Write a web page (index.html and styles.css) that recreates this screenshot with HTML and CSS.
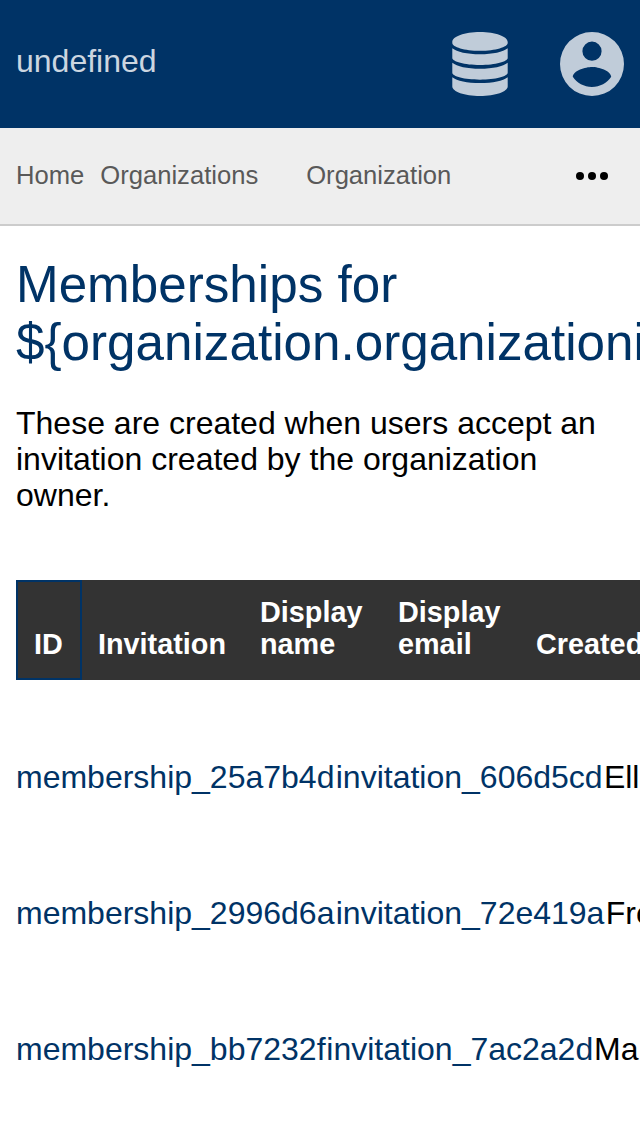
FILE: index.html
```html
<!DOCTYPE html>
<html lang="en">
<head>
<meta charset="utf-8">
<title>Memberships</title>
<link rel="stylesheet" href="styles.css">
</head>
<body>
<header class="topbar">
  <a class="brand">undefined</a>
  <nav class="actions">
    <svg class="database" viewBox="0 0 56 64"><path d="M28 0C43.5 0 55.7 4.5 55.7 10V11C55.7 15 43.5 18.8 28 18.8S.3 15 .3 11V10C.3 4.5 12.5 0 28 0ZM.3 16.2C5 20 15 22.2 28 22.2S51 20 55.7 16.2V26C55.7 29.5 43.5 33 28 33S.3 29.5 .3 26ZM.3 30.8C5 34.6 15 36.8 28 36.8S51 34.6 55.7 30.8V40.8C55.7 44.3 43.5 47.7 28 47.7S.3 44.3 .3 40.8ZM.3 45.2C5 49 15 51.1 28 51.1S51 49 55.7 45.2V54.5C55.7 59.5 43.5 64 28 64S.3 59.5 .3 54.5Z"/></svg>
    <svg class="account" viewBox="2 2 20 20"><path d="M12 19.2C9.5 19.2 7.29 17.92 6 16C6.03 14 10 12.9 12 12.9S17.97 14 18 16C16.71 17.92 14.5 19.2 12 19.2M12 5A3 3 0 0 1 15 8A3 3 0 0 1 12 11A3 3 0 0 1 9 8A3 3 0 0 1 12 5M12 2A10 10 0 0 0 2 12A10 10 0 0 0 12 22A10 10 0 0 0 22 12A10 10 0 0 0 12 2Z"/></svg>
  </nav>
</header>
<nav class="crumbs">
  <a class="crumb home">Home</a>
  <a class="crumb orgs">Organizations</a>
  <a class="crumb">Organization</a>
  <svg class="more" viewBox="0 0 32 8"><circle cx="4" cy="4" r="4"/><circle cx="16" cy="4" r="4"/><circle cx="28" cy="4" r="4"/></svg>
</nav>
<main class="content">
  <h1 class="title">Memberships for ${organization.organizationid}</h1>
  <p class="intro">These are created when users accept an invitation created by the organization owner.</p>
  <div class="table">
    <div class="head">
      <div class="th id">ID</div>
      <div class="th invitation">Invitation</div>
      <div class="th display">Display name</div>
      <div class="th display">Display email</div>
      <div class="th created">Created</div>
    </div>
    <div class="row"><a class="link">membership_25a7b4d</a><a class="link">invitation_606d5cd</a><span>Ell</span></div>
    <div class="row"><a class="link">membership_2996d6a</a><a class="link">invitation_72e419a</a><span>Fre</span></div>
    <div class="row tight"><a class="link">membership_bb7232f</a><a class="link">invitation_7ac2a2d</a><span>Ma</span></div>
  </div>
</main>
</body>
</html>
```
FILE: styles.css
```css
* { box-sizing: border-box; }
html { overflow: hidden; }
body {
  margin: 0;
  height: 1136px;
  overflow: hidden;
  background: #fff;
  color: #000;
  font: 32px/36px "Liberation Sans", Arial, sans-serif;
}
.topbar {
  display: flex;
  justify-content: space-between;
  align-items: center;
  height: 128px;
  padding: 0 16px;
  background: #036;
}
.brand { color: #ccd6e0; padding-bottom: 6px; }
.actions { display: flex; gap: 52px; fill: #c0ccd9; }
.database { width: 56px; height: 64px; }
.account { width: 64px; height: 64px; }
.crumbs {
  display: flex;
  align-items: center;
  height: 98px;
  padding: 0 32px 0 16px;
  background: #eee;
  border-bottom: 2px solid #ccc;
  font-size: 25.6px;
}
.crumb { color: #595959; padding-bottom: 2px; }
.home { margin-right: 16px; }
.orgs { margin-right: 48px; }
.more { width: 32px; height: 8px; margin-left: auto; }
.content { padding: 30px 16px 0; overflow: hidden; }
.title {
  margin: 0;
  color: #036;
  font-size: 51.2px;
  font-weight: 400;
  line-height: 58px;
}
.intro { margin: 33px 0 67px; }
.table { width: max-content; }
.head {
  display: flex;
  height: 100px;
  background: #333;
  color: #fff;
  font-size: 28.8px;
  font-weight: 700;
  line-height: 32px;
}
.th {
  display: flex;
  align-items: flex-end;
  padding: 0 16px 20px;
}
.id { width: 66px; border: 2px solid #036; padding-bottom: 18px; }
.invitation { width: 162px; }
.display { width: 138px; }
.created { width: 180px; }
.row {
  display: flex;
  align-items: center;
  height: 136px;
  white-space: nowrap;
}
.head + .row { margin-top: 29px; }
.link { color: #036; margin-right: 1.3px; }
.tight .link { margin-right: .8px; }
```
